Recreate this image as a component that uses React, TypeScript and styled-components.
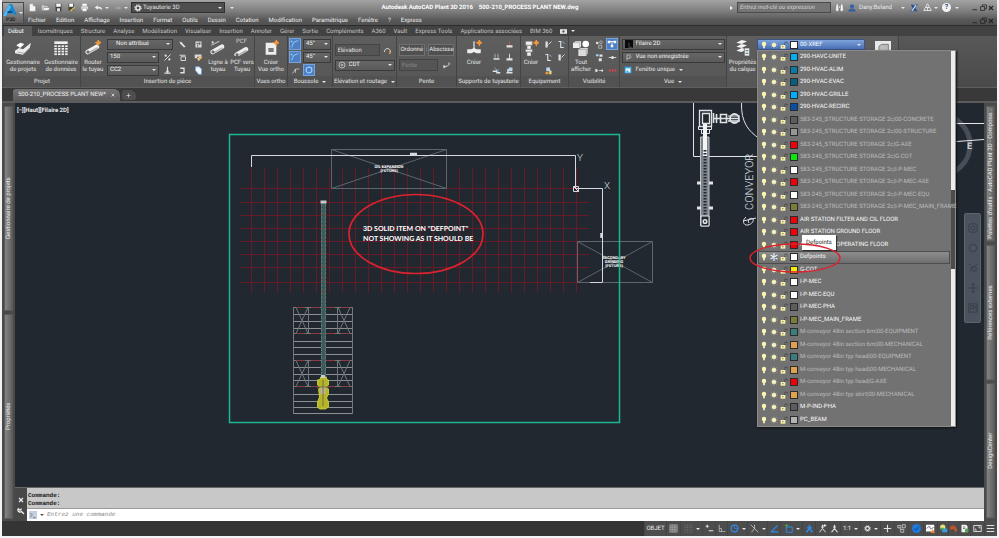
import React from 'react';
import styled, { createGlobalStyle, css } from 'styled-components';

const GlobalStyle = createGlobalStyle`
  * { box-sizing: border-box; }
  body { margin: 0; background: #f2f3f5; font-family: Roboto, "Liberation Sans", sans-serif; font-size: 6px; line-height: 8px; color: #e4e4e4; text-rendering: geometricPrecision; }
  button, input, select { font: inherit; color: inherit; text-rendering: inherit; margin: 0; padding: 0; border: 0; background: none; border-radius: 0; }
  svg { display: block; flex: none; }
  ul { list-style: none; margin: 0; padding: 0; }
`;

/* ---------- icons ---------- */

const W = '#e2e2e2';
const O = '#f0963c';
const B = '#2e8ae6';
const N = '#343d47';
const line = { fill: 'none', stroke: W, strokeWidth: 1.2 };

const pipe = (
  <g>
    <path d="M2 9 L9 5" stroke="#f0f0f0" strokeWidth="3.4" strokeLinecap="round" />
    <path d="M2.4 9.8 L9.4 5.8" stroke="#a8a8a8" strokeWidth="1" />
    <circle cx="2.2" cy="9" r="1.1" fill="#666" />
  </g>
);
const spark = <path d="M10 0l.6 1.4 1.4.6-1.4.6L10 4l-.6-1.4L8 2l1.4-.6z" fill={O} stroke={O} strokeWidth=".8" />;

const icons: Record<string, React.ReactNode> = {
  newFile: <path d="M2 1h5l3 3v7H2zM7 1v3h3" fill="#f4f4f4" stroke="#888" strokeWidth=".5" />,
  open: <g><path d="M1 3h3l1 1h4v2H4L2 10H1z" fill="#c9c9c9" /><path d="M4 6h8l-2 4H2z" fill="#f2f2f2" stroke="#666" strokeWidth=".5" /></g>,
  save: <g><path d="M2 1h8v10H2z" fill="#444" /><path d="M3 1h6v4H3z" fill="#fff" /><path d="M4 7h4v4H4z" fill="#ddd" /></g>,
  saveAs: <g><path d="M2 1h7v9H2z" fill="#444" /><path d="M3 1h5v4H3z" fill="#fff" /><path d="M4 10l6-5 1 1-5 5z" fill="#f1c24a" /></g>,
  print: <g><path d="M3 1h6v3H3z" fill="#fff" /><path d="M1 4h10v5H1z" fill="#ddd" stroke="#666" strokeWidth=".5" /><path d="M3 7h6v4H3z" fill="#fff" stroke="#777" strokeWidth=".5" /></g>,
  undo: <path d="M1 6l4-3v2c4-.5 6 1 6 5-1-2-3-2.600-6-2.500V9z" fill="#efefef" />,
  redo: <path d="M11 6L7 3v2H2v2h5v2z" fill="#a5a5a5" />,
  gear: <g fill="none" stroke="#f4f4f4"><circle cx="6" cy="6" r="3.200" strokeWidth="2" /><circle cx="6" cy="6" r="4.900" strokeWidth="1.300" strokeDasharray="2 1.850" /></g>,
  projects: <g><path d="M0 8l3-2 3 1 6-5-1 4-5 5-6-1z" fill="#ededed" /><path d="M1 4l3-2 3 1-3 3z" fill="#fff" /><path d="M2 9l5 1 4-4" stroke="#888" strokeWidth=".5" fill="none" /></g>,
  data: <g fill="#f0f0f0"><path d="M1 1h10v2H1z" />{[4, 6, 8, 10].map(y => [1, 3.700, 6.400, 9.100].map(x => <rect key={`${x}${y}`} x={x} y={y} width="1.900" height="1.300" />))}</g>,
  routePipe: <g>{pipe}{spark}</g>,
  linePipe: <g>{pipe}<path d="M1 4l6-3" stroke="#bbb" strokeWidth=".8" /><circle cx="2" cy="1.800" r=".8" fill={W} /></g>,
  pcfPipe: <g><g transform="translate(0 2)">{pipe}</g></g>,
  ortho: <g><path d="M2 2h7l1 2v7H2z" fill="#eee" /><path d="M4 6h4v3H4z" fill="#777" />{spark}</g>,
  probe: <path d="M2 2l3 1 5 6-2 1-5-5z" fill="#ddd" />,
  table: <g><path d="M2 2h8v8H2z" fill="#ddd" /><path d="M3 4.500h6M5 5v5M7.500 3v4" stroke="#555" /></g>,
  percent: <g><path d="M2 10l8-8" {...line} /><circle cx="3.500" cy="3.500" r="1.500" fill={W} /><circle cx="8.500" cy="8.500" r="1.500" fill={W} /></g>,
  frame: <g><path d="M2 3h8M4 5v5h6V5z" {...line} /></g>,
  bracket: <g><path d="M1 2h9v3H4v2H1z" fill="#d8d8d8" /><path d="M4 7l5-3 2 2-5 5z" fill="#e9c58a" /><path d="M6 8l4-3" stroke={O} /></g>,
  tee: <path d="M6 1v8M2 9.500h8M4 7h4" {...line} strokeWidth="1.600" />,
  elbow: <path d="M3 3h5v6H3" {...line} strokeWidth="1.800" />,
  capsule: <path d="M2 1h5l3 3v7H6L2 6z" fill="#f1f6fc" stroke="#6aa6e2" />,
  arc: <g><path d="M2 10C3 5 6 2 10 2" fill="none" stroke="#8fc0f2" strokeWidth="1.300" /><path d="M1 2h2v2H1z" fill="#9cc9f5" /></g>,
  slope: <path d="M2 10l4-6h5M6 4v5" {...line} strokeWidth=".9" />,
  compass: <circle cx="6" cy="6" r="3.500" fill="none" stroke="#a6d0fb" strokeWidth="1.300" />,
  rotate: <g><path d="M2 8a4 4 0 1 1 7 2" {...line} /><path d="M9 6l2 3-3 2z" fill={O} /></g>,
  target: <g><circle cx="6" cy="6" r="4.500" {...line} strokeWidth="1" /><path d="M6 4v4M4 6h4" stroke={W} /></g>,
  slopeTag: <g><path d="M2 7h5l3-3" {...line} /><path d="M2 5v5l3-2z" fill={W} /><path d="M8 2h3v3H8z" fill="#999" /></g>,
  support: <g><path d="M6 1v6M1 8h10" stroke="#ddd" strokeWidth="1" /><path d="M1 7h3l2-1 2 1h3v3H8l-2-1-2 1H1z" fill="#eee" />{spark}</g>,
  clamp: <g><path d="M6 1v7" {...line} /><path d="M2 7h8v3H2z" fill={W} /></g>,
  clampRed: <g><path d="M6 2v6" stroke="#e05a4a" /><path d="M2 7h8v3H2z" fill={W} /></g>,
  clampUp: <g><path d="M4 1v6M8 1v6" {...line} strokeWidth=".8" /><path d="M2 7h8v2H2z" fill={W} /></g>,
  clampBlue: <g><path d="M3 2l3 3v5M8 4v4" stroke="#8fc0f2" fill="none" /><path d="M1 6h6v2H1zM6 8h5v2H6z" fill={W} /></g>,
  clampBox: <g><path d="M5 2h5v5H5z" fill="#b7d6f7" /><path d="M2 8h8v2H2zM3 4h2v4H3z" fill={W} /></g>,
  vessel: <g><path d="M2 1h5v3H2zM3 4h3v3H3zM2 7h5v2H2zM3 9h3v3H3z" fill="#eee" stroke="#777" strokeWidth=".4" />{spark}</g>,
  nozzle: <g><path d="M2 2h3v8H2z" fill={W} /><path d="M6 6l4-4" {...line} /></g>,
  nozzleBlue: <g><path d="M2 2h3v8h4" fill="none" stroke={W} strokeWidth="1.500" /><path d="M7 2l3 3" stroke="#7db6f2" strokeWidth="1.300" /></g>,
  equipMix: <g><path d="M3 2h5v5H3z" fill="#b7d6f7" /><path d="M2 8h4v3H2z" fill={O} /><path d="M7 6h3v5H7z" fill="#f0dc7a" /></g>,
  showAll: <g><path d="M0 2l2-1h4v4l-1 1H0z" fill="#eee" /><circle cx="9.500" cy="3" r="2.500" fill="#fff" /><path d="M4 7l2-1h5v4l-1 2H4z" fill="#ddd" /><path d="M0 2h5v4M4 7h6v5" fill="none" stroke="#888" strokeWidth=".4" /></g>,
  balls: <g><circle cx="3" cy="4" r="1.800" fill={W} /><circle cx="8" cy="3" r="1.800" {...line} strokeWidth=".7" /><path d="M5 7h4v4H5z" {...line} strokeWidth=".8" /></g>,
  ballsBlue: <g><circle cx="3" cy="3" r="1.800" fill="#9cc9f5" /><path d="M6 2h4v3H6zM5 7h4v4H5z" fill={W} /></g>,
  nodes: <g><path d="M2 3h8M6 3v6" stroke="#fff" /><path d="M1 2h3v3H1zM8 2h3v3H8zM4.500 7h3v3h-3z" fill="#fff" /></g>,
  dashNode: <g><path d="M1 6h10" {...line} /><circle cx="6" cy="6" r="2" fill={W} /></g>,
  dashNode2: <g><path d="M1 4v4l3-2zM5 6h3" fill={W} stroke={W} /><circle cx="9.500" cy="6" r="1.500" fill={W} /></g>,
  redNodes: <g fill="#d8474a"><path d="M1 4v4l4-2zM11 4v4L7 6z" /><path d="M5.300 4h1.400v4H5.300z" /></g>,
  visual: <g><path d="M0 0h12v12H0z" fill="#0a0a0a" /><path d="M6 4v7h5" stroke="#666" fill="none" /></g>,
  viewTag: <path d="M3 11V3h6M6 6h4M3 8h5" {...line} strokeWidth=".9" />,
  viewport: <g><path d="M1 1h10v10H1z" fill="#38a8e8" /><path d="M2.500 3.500h7v6h-7z" fill="#e9f6ff" /><path d="M2.500 9.500l3-3 2 3z" fill="#38a8e8" /></g>,
  layers: <g><path d="M1 2l4-2 4 1-4 2zM1 5l4-2 4 1-4 2zM1 8l4-2 4 1-4 2z" fill="#f3f3f3" /><path d="M7 6h4v6H7z" fill="#eee" stroke="#555" strokeWidth=".5" /><path d="M8 8h2M8 10h2" stroke="#367" strokeWidth=".7" /></g>,
  block: <g><path d="M0 0h12v12H0z" fill="#e8e8e8" /><path d="M3 4l2-1.500h5V9L8.500 11H3z" fill="#bbb" stroke="#777" strokeWidth=".7" /></g>,
  bulb: <g><circle cx="6" cy="4.500" r="3.300" fill="#fbf6b4" /><path d="M4.500 7.500h3V11h-3z" fill="#ebe6b8" /></g>,
  sun: <g><circle cx="6" cy="6" r="3.100" fill="#fdfbd8" /><path d="M6 1v10M1 6h10M2.500 2.500l7 7M9.500 2.500l-7 7" stroke="#f4efb4" strokeWidth=".8" /></g>,
  frost: <g stroke="#e6f3ff" strokeWidth="1.700"><path d="M6 0v12M.8 3l10.400 6M11.200 3L.8 9" /></g>,
  lock: <g><path d="M1 6h7v5.500H1z" fill="#fbf0a8" /><path d="M3.500 7.500h1.500v2H3.500z" fill="#665" /><path d="M7 6V3C7 1 11 1 11 3v2" fill="none" stroke="#222" strokeWidth="1" strokeDasharray="2 1" /></g>,
  binoculars: <g fill="#f2f2f2" stroke="#444" strokeWidth=".4"><path d="M2 1h2l1 4v6H1V6zM8 1h2l1 5v5H7V5z" /><path d="M5 4h2v3H5z" /></g>,
  user: <g fill="#2f66ad" stroke="#1d4680" strokeWidth=".4"><circle cx="6" cy="3.500" r="2.700" /><path d="M1 11c0-5 10-5 10 0z" /></g>,
  exchange: <g><path d="M1 1h4l6 10H7z" fill="#1b4f94" /><path d="M8 1h3L4 11H1z" fill="#eee" stroke="#1b4f94" strokeWidth="1" /></g>,
  a360: <path d="M6 1l5 9H1zM3.500 6h5M6 5v5" fill="none" stroke="#e8e8e8" strokeWidth="1.200" />,
  snapGrid: <path d="M1 1h10v10H1zM4.300 1v10M7.600 1v10M1 4.300h10M1 7.600h10" fill="#777" stroke="#a5a5a5" strokeWidth=".8" />,
  dots: <g fill="#777">{[1, 4, 7, 10].map(y => [1, 4, 7, 10].map(x => <rect key={`${x}-${y}`} x={x} y={y} width="1.300" height="1.300" />))}</g>,
  dynInput: <path d="M1 3h4M3 1v4M5 9h6" stroke={W} strokeWidth="1.500" />,
  orthoMode: <path d="M3 1v9h8M3 6h3v4" fill="none" stroke="#aaa" strokeWidth="1.200" />,
  polar: <g><circle cx="6" cy="6" r="4.500" fill="none" stroke={B} strokeWidth="1.600" /><path d="M6 6V3M6 6h4" stroke={B} /></g>,
  iso: <path d="M1 1l10 10M6 1v5M6 6l-4 5" {...line} strokeWidth=".9" />,
  track: <path d="M1 11L10 2M1 10.500h10" stroke={B} strokeWidth="1.500" />,
  osnap: <g><path d="M3 4h8v7H3z" fill="none" stroke={B} strokeWidth="1.300" /><path d="M1 2h5M3.500 0v5" stroke="#45b34c" /></g>,
  annoBlue: <path d="M6 1v5L2 11M6 6l4 5M3 5h6" fill="none" stroke={B} strokeWidth="2.200" />,
  anno: <path d="M6 1v5L2 11M6 6l4 5M4 4h4" fill="none" stroke={W} strokeWidth="1.600" />,
  annoPlus: <path d="M6 1v5L2 11M6 6l4 5M4 4h4M9 0v4M7 2h4" fill="none" stroke={W} strokeWidth="1.300" />,
  plus: <path d="M6 1v10M1 6h10" {...line} strokeWidth="1.500" />,
  links: <path d="M1 2h4v3H1zM7 1h4v4H7zM5 7h4v4H5zM3 5l3 3" {...line} strokeWidth=".9" />,
  check: <g><circle cx="6" cy="6" r="6" fill="#1e79dc" /><path d="M3 6l2.300 2.500L9 3.500" fill="none" stroke="#0b3f80" strokeWidth="1.200" /></g>,
  monitor: <g><path d="M0 1h11v9H0z" fill="#fff" /><path d="M1 6l3-3 3 4 3-3" fill="none" stroke="#444" /><path d="M9 7l3 5H6z" fill="#f0862c" /></g>,
  globe: <g><circle cx="5" cy="4" r="3.500" fill="#e9e27b" /><path d="M4 6h7v5H4z" fill="#3a9fd8" /><path d="M2 5h4v3H2z" fill="#4aa04a" /></g>,
  tag: <path d="M1 5c2-5 9-4 10 4L8 11C8 7 5 5 2 8z" fill="#c0532c" />,
  sheet: <g><path d="M2 1h6l2 2v8H2z" fill="#f3f3f3" /><path d="M4 4h3M4 6h3" stroke="#555" /><circle cx="9" cy="8.500" r="2.500" fill="#4ea354" /></g>,
  fullscreen: <path d="M1 2h10v8H1zM7 4h2v2M3 6v2h2" {...line} />,
  menu: <path d="M1 2h10M1 6h10M1 10h10" {...line} strokeWidth="1.600" />,
  wrench: <path d="M10.500 10.500L6 6M2 2.500l2.500 2.500L7 2.500M2.500 2a3.200 3.200 0 1 0 4.500 4.500" fill="none" stroke="#f2f2f2" strokeWidth="1.800" />,
  close: <path d="M2 2l8 8M10 2l-8 8" stroke="currentColor" strokeWidth="2.200" />,
  minimize: <path d="M1 9.500h9" stroke="currentColor" strokeWidth="1.800" />,
  restore: <path d="M4 4V1.500h7V8H8M1 4.500h7V11H1z" fill="none" stroke="currentColor" strokeWidth="1.300" />,
  camera: <g><path d="M0 2h12v8H0z" fill="#e6e6e6" /><circle cx="6" cy="6" r="2" fill="#555" /></g>,
  prompt: <g><path d="M0 0h12v12H0z" fill="#c3cfdf" /><path d="M2 3l3 3-3 3M6 10h4" fill="none" stroke="#4a5868" /></g>,
  wheel: <g fill="none" stroke={N}><rect x="1" y="1" width="10" height="10" rx="2" /><circle cx="6" cy="6" r="2.500" /></g>,
  orbit: <circle cx="6" cy="6" r="4.500" fill="none" stroke={N} />,
  zoomNav: <g fill="none" stroke={N}><path d="M1 1l10 10M11 1L1 11" strokeDasharray="3 2" /><circle cx="7" cy="7" r="3" /></g>,
  pan: <path d="M6 0v12M0 6h12M4 2l2-2 2 2M4 10l2 2 2-2" fill="none" stroke={N} />,
  showMotion: <path d="M1 1h10v10H1zM3 3h4v4H3zM6 5h4v4" fill="none" stroke={N} />,
};

const Icon = ({ name, size = 8 }: { name: string; size?: number }) => (
  <svg width={size} height={size} viewBox="0 0 12 12" aria-hidden="true">{icons[name]}</svg>
);

const Caret = styled.span`
  flex: none; width: 0; height: 0;
  border: 2px solid transparent; border-top-color: #e6e6e6; border-bottom: 0;
`;

/* ---------- shell ---------- */

const Page = styled.div`
  min-height: 100vh; display: flex; flex-direction: column;
  margin: 0 2px; padding-bottom: 2px; overflow: hidden;
`;
const Header = styled.header`
  display: flex; height: 26px;
  background: linear-gradient(#a3a3a3, #7e7e7e 45%, #585858 80%, #505050);
  border-bottom: 1px solid #2d2d2d;
`;
const LogoButton = styled.button`
  display: flex; align-items: center; justify-content: center; gap: 2px;
  width: 22px; height: 22px; margin: 2px 2px 0 0;
  background: linear-gradient(#a5a5a5, #606060); border: 1px solid #4a4a4a;
`;
const HeaderRows = styled.div`flex: 1; display: grid; grid-template-rows: 15px 11px; min-width: 0;`;
const TitleRow = styled.div`display: flex; align-items: center; padding: 0 2px 0 2px;`;
const QuickBar = styled.div`display: flex; align-items: center; gap: 4px;`;
const IconButton = styled.button<{ $active?: boolean; $w?: number }>`
  display: flex; align-items: center; justify-content: center; gap: 2px;
  width: ${p => p.$w ?? 9}px; height: ${p => (p.$w === 12 ? 12 : 10)}px;
  ${p => p.$active && css`background: #4c7fc4; border: 1px solid #7aa5dc;`}
`;
const Workspace = styled.label`
  display: flex; align-items: center; gap: 1px; width: 94px; height: 11px;
  padding: 0 2px; margin: 0 2px;
  background: #4e4e4e; border: 1px solid #303030;
  select { flex: 1; appearance: none; }
`;
const AppTitle = styled.h1`
  flex: 1; margin: 0; padding-right: 6px; text-align: center;
  font-size: 6px; line-height: 8px; font-weight: 700; color: #fff; white-space: pre;
`;
const AccountBar = styled.div`display: flex; align-items: center; gap: 4px;`;
const SearchBox = styled.input`
  width: 94px; height: 11px; padding: 0 2px; font-style: italic;
  background: #747474; border: 1px solid #4a4a4a;
  &::placeholder { color: #d2d2d2; opacity: 1; }
`;
const SearchToggle = styled.button`
  width: 0; height: 0; border: 2px solid transparent; border-left: 3px solid #f0f0f0; border-right: 0;
`;
const UserButton = styled.button`
  display: flex; align-items: center; gap: 3px; width: 57px; color: #eee;
  ${Caret} { margin-left: auto; }
`;
const Help = styled.button`
  width: 9px; height: 9px; border-radius: 50%; background: #f4f4f4; color: #2f4f86;
  font-weight: 700; line-height: 9px; font-size: 7px;
`;
const WindowButtons = styled.div`
  display: flex; align-items: center; width: 24px; margin-left: 12px; color: #222;
  button { flex: 1; display: flex; justify-content: center; }
`;
const MenuRow = styled.nav`
  display: flex; align-items: center; gap: 10px; padding: 0 2px 0 2px; color: #f0f0f0;
  button { white-space: nowrap; }
  ${WindowButtons} { margin-left: auto; gap: 0; }
`;
const RibbonTabs = styled.div`
  display: flex; height: 10px; padding-left: 2px; background: #424242;
`;
const RibbonTab = styled.button<{ $active?: boolean }>`
  display: flex; align-items: center; gap: 4px; padding: 0 4px; line-height: 9px; white-space: nowrap; color: #c4c4c4;
  ${p => p.$active && css`background: #5c5c5c; color: #fff; padding: 0 8px 0 4px; margin-right: 2px;`}
`;

/* ---------- ribbon ---------- */

const Ribbon = styled.div`
  display: flex; height: 52px; padding-left: 2px;
  background: linear-gradient(#585858, #4a4a4a); border-bottom: 1px solid #5f5f5f;
`;
const PanelBox = styled.section<{ $w: number }>`
  flex: none; width: ${p => p.$w}px;
  display: grid; grid-template-rows: 1fr 11px; padding-top: 2px;
  background: linear-gradient(#5e5e5e, #565656);
  border-right: 1px solid #444;
`;
const PanelBody = styled.div<{ $gap?: number }>`
  display: flex; justify-content: center; gap: ${p => p.$gap ?? 2}px; min-width: 0;
`;
const PanelLabel = styled.h2`
  display: flex; align-items: center; justify-content: center; gap: 4px; white-space: nowrap;
  margin: 0; font-size: 6px; line-height: 8px; font-weight: 400; background: #525252;
`;
const Panel = ({ w, title, menu, gap, children }: { w: number; title?: string; menu?: boolean; gap?: number; children: React.ReactNode }) => (
  <PanelBox $w={w}>
    <PanelBody $gap={gap}>{children}</PanelBody>
    <PanelLabel>{title}{menu && <Caret />}</PanelLabel>
  </PanelBox>
);

const Big = styled.button<{ $w: number }>`
  position: relative; display: flex; flex-direction: column; align-items: center; gap: 3px;
  width: ${p => p.$w}px; padding-top: 2px; line-height: 7px; white-space: pre; text-align: center;
`;
const Overline = styled.span`position: absolute; top: 0; left: 6px; color: #d0d0d0;`;
const Stack = styled.div<{ $wide?: boolean }>`
  display: grid; grid-auto-rows: 12px; gap: 1px; align-content: start; align-items: center;
  ${p => p.$wide && css`padding-top: 6px; gap: 3px;`}
`;
const Row = styled.div<{ $gap?: number }>`display: flex; align-items: center; gap: ${p => p.$gap ?? 2}px;`;
const Pair = styled.div<{ $cols?: number; $col?: number }>`
  display: grid; grid-template-columns: repeat(${p => p.$cols ?? 2}, ${p => p.$col ?? 12}px);
  grid-auto-rows: 12px; gap: 1px; align-content: start; justify-items: center; align-items: center;
`;
const Field = styled.label<{ $w: number; $indent?: boolean }>`
  display: flex; align-items: center; gap: 3px; width: ${p => p.$w}px; height: 11px;
  padding: 0 2px 0 ${p => (p.$indent ? 8 : 2)}px;
  background: linear-gradient(#666, #5a5a5a); border: 1px solid #3a3a3a; color: #f0f0f0;
  select { flex: 1; min-width: 0; appearance: none; overflow: hidden; }
`;
const TextField = styled.input<{ $w: number }>`
  width: ${p => p.$w}px; height: 12px; padding: 0 2px; background: #555; border: 1px solid #444;
  &::placeholder { color: inherit; opacity: 1; }
  &:disabled { color: #888; }
`;
const FlatButton = styled.button<{ $w: number }>`
  width: ${p => p.$w}px; height: 12px; background: #505050; border: 1px solid #707070; color: #f0f0f0;
`;
const TextButton = styled.button`display: flex; align-items: center; gap: 4px; padding-left: 2px;`;

const Combo = ({ w, value, label, icon, indent }: { w: number; value: string; label: string; icon?: string; indent?: boolean }) => (
  <Field $w={w} $indent={indent}>
    {icon && <Icon name={icon} />}
    <select aria-label={label} defaultValue={value}><option>{value}</option></select>
    <Caret />
  </Field>
);
const Tool = ({ name, label, active }: { name: string; label: string; active?: boolean }) => (
  <IconButton $w={12} $active={active} aria-label={label}><Icon name={name} size={active ? 10 : 9} /></IconButton>
);

/* ---------- layer list ---------- */

type Layer = { name: string; color: string; xref?: boolean };
const S = '583-245_STRUCTURE STORAGE 2c|';
const layers: Layer[] = [
  { name: '290-HAVC-UNITE', color: '#00aeef' },
  { name: '290-HVAC-ALIM', color: '#0a7aa6' },
  { name: '290-HVAC-EVAC', color: '#075f80' },
  { name: '290-HVAC-GRILLE', color: '#00aeff' },
  { name: '290-HVAC-RECIRC', color: '#0650a6' },
  { name: S + '00-CONCRETE', color: '#5c5c5c', xref: true },
  { name: S + '00-STRUCTURE', color: '#969696', xref: true },
  { name: S + 'G-AXE', color: '#f00008', xref: true },
  { name: S + 'G-COT', color: '#0be610', xref: true },
  { name: S + 'I-P-MEC', color: '#fff', xref: true },
  { name: S + 'I-P-MEC-AXE', color: '#f00008', xref: true },
  { name: S + 'I-P-MEC-EQU', color: '#fff', xref: true },
  { name: S + 'I-P-MEC_MAIN_FRAME', color: '#7c7c38', xref: true },
  { name: 'AIR STATION FILTER AND CIL FLOOR', color: '#f00008' },
  { name: 'AIR STATION GROUND FLOOR', color: '#f00008' },
  { name: 'AIR STATION OPERATING FLOOR', color: '#f00008' },
  { name: 'Defpoints', color: '#fff' },
  { name: 'G-COT', color: '#f7ee00' },
  { name: 'I-P-MEC', color: '#fff' },
  { name: 'I-P-MEC-EQU', color: '#fff' },
  { name: 'I-P-MEC-PHA', color: '#5c5c5c' },
  { name: 'I-P-MEC_MAIN_FRAME', color: '#7c7c38' },
  { name: 'M-conveyor 48in section 6m|00-EQUIPMENT', color: '#3c7c7c', xref: true },
  { name: 'M-conveyor 48in section 6m|00-MECHANICAL', color: '#e0a050', xref: true },
  { name: 'M-conveyor 48in typ head|00-EQUIPMENT', color: '#3c7c7c', xref: true },
  { name: 'M-conveyor 48in typ head|00-MECHANICAL', color: '#e0a050', xref: true },
  { name: 'M-conveyor 48in typ head|G-AXE', color: '#f00008', xref: true },
  { name: 'M-conveyor 48in typ skirt|00-MECHANICAL', color: '#e0a050', xref: true },
  { name: 'M-P-IND-PHA', color: '#5c5c5c' },
  { name: 'PC_BEAM', color: '#b4b4b4' },
];

const LayerAnchor = styled.div`position: relative; z-index: 5; padding-top: 1px;`;
const LayerCombo = styled.button`
  display: flex; align-items: center; width: 108px; height: 11px; padding: 0 3px 0 2px;
  background: linear-gradient(#7fa3da, #4a6fb4); border: 1px solid #3c5588; color: #fff;
  ${Caret} { margin-left: auto; }
`;
const LayerMenu = styled.div`
  position: absolute; top: 12px; left: 0; display: flex; width: 199px; height: 377px;
  background: #727272; border: 1px solid #8a8a8a; box-shadow: 1px 1px 2px #111;
`;
const LayerList = styled.ul`
  flex: 1; display: grid; grid-template-columns: minmax(0, 1fr); grid-auto-rows: 1fr; min-width: 0; padding-right: 1px;
`;
const LayerRow = styled.li<{ $xref?: boolean; $current?: boolean }>`
  position: relative; display: flex; align-items: center; padding-left: 1px; white-space: nowrap;
  border: 1px solid transparent; color: ${p => (p.$xref ? '#bcbcbc' : '#fafafa')};
  ${p => p.$current && css`background: linear-gradient(#8d8d8d, #6e6e6e); border-color: #4e4e4e;`}
`;
const Glyphs = styled.span`display: flex; align-items: center; gap: 2px; width: 30px; flex: none;`;
const Swatch = styled.span<{ $color: string }>`
  flex: none; width: 8px; height: 8px; margin-right: 2px; border: 1px solid #2c2c2c; background: ${p => p.$color};
`;
const ScrollTrack = styled.div`display: flex; flex-direction: column; width: 4px; background: #ececec; padding-top: 139px;`;
const ScrollThumb = styled.div`height: 79px; background: #4c4c4c;`;
const Tooltip = styled.span`
  position: absolute; z-index: 2; left: 43px; top: -17px; width: 34px; padding: 3px 0; line-height: 9px; text-align: center;
  background: #fff; color: #222; font-size: 6px; box-shadow: 1px 1px 1px #333;
`;
const Ring = styled.svg`position: absolute; left: -11px; top: -10px; z-index: 3; pointer-events: none;`;

const LayerGlyphs = ({ frozen }: { frozen?: boolean }) => (
  <Glyphs><Icon name="bulb" size={8} /><Icon name={frozen ? 'frost' : 'sun'} size={8} /><Icon name="lock" size={8} /></Glyphs>
);

/* ---------- workspace ---------- */

const FileTabs = styled.div`
  display: flex; align-items: flex-end; height: 15px; padding-left: 11px; background: #393939;
  border-bottom: 2px solid #5c5c5c;
`;
const FileTab = styled.button`
  display: flex; align-items: center; gap: 5px; height: 12px; padding: 0 5px;
  background: linear-gradient(#747474, #5c5c5c); border-radius: 3px 6px 0 0; color: #f0f0f0;
`;
const NewTab = styled.button`
  display: flex; align-items: center; justify-content: center; width: 14px; height: 10px;
  margin: 0 0 1px 2px; background: #4e4e4e; border-radius: 3px 6px 3px 3px;
`;
const Work = styled.main`flex: 1; display: flex; min-height: 0;`;
const Dock = styled.aside`
  flex: none; width: 13px; display: flex; flex-direction: column; gap: 3px; padding: 3px 2px 2px;
  background: #4a4a4a;
`;
const DockBar = styled.button`
  flex: 1; writing-mode: vertical-rl; transform: rotate(180deg); white-space: nowrap;
  background: linear-gradient(90deg, #5f5f5f, #858585); border: 1px solid #5a5a5a; color: #eee; line-height: 8px;
`;
const Center = styled.div`flex: 1; display: flex; flex-direction: column; min-width: 0;`;
const Canvas = styled.div`
  position: relative; flex: 1; min-height: 0; overflow: hidden; background: #212830;
`;
const Drawing = styled.svg`position: absolute; inset: 0; width: 100%; height: 100%;`;
const ViewLabel = styled.div`position: relative; padding: 3px 2px; line-height: 9px; font-weight: 700; color: #e6e6e6;`;
const NavBar = styled.div`
  position: absolute; right: 3px; top: 110px; width: 17px; padding: 9px 0;
  display: flex; flex-direction: column; align-items: center; gap: 10px;
  background: #4b545e; border: 1px solid #5d656e; border-radius: 2px;
`;
const Command = styled.div`display: grid; grid-template-columns: 12px 1fr; height: 34px; border-top: 1px solid #666;`;
const CommandTools = styled.div`
  display: flex; flex-direction: column; align-items: center; justify-content: flex-end; gap: 4px;
  padding-bottom: 6px; background: #474747; color: #f2f2f2;
`;
const CommandBody = styled.div`
  display: grid; grid-template-rows: 1fr 12px; font: 6px/8px "Liberation Mono", monospace; color: #222;
`;
const History = styled.div`
  background: #c8c8c8; border-bottom: 1px solid #999; padding: 0 1px; display: flex; flex-direction: column; justify-content: flex-end;
  font-weight: 700;
`;
const CommandLine = styled.label`
  display: flex; align-items: center; gap: 3px; padding-left: 2px; background: #fff;
  ${Caret} { border-top-color: #555; }
  input { flex: 1; font-style: italic; }
  input::placeholder { color: #8a8a8a; opacity: 1; }
`;
const Status = styled.footer`
  display: flex; justify-content: flex-end; height: 15px; background: #343434;
`;
const StatusTools = styled.div`display: flex; align-items: stretch; background: #4d4d4d; padding-right: 1px;`;
const StatusButton = styled.button<{ $w: number }>`
  display: flex; align-items: center; justify-content: center; gap: 3px; width: ${p => p.$w}px;
  color: #f0f0f0; border-left: 1px solid #454545;
`;

const Plant = () => {
  const xs = Array.from({ length: 26 }, (_, i) => 251.5 + i * 13);
  const ys = [188.5, 202.5, 215.5, 228.5, 241.5, 254.500, 267.5, 282.5];
  const beams = [314.5, 321.5, 328.5, 341.5, 347.5, 354.5, 367.5, 374.5, 380.5, 394.5, 401.5, 407.5, 413.5];
  return (
    <Drawing viewBox="15 103 969 384" preserveAspectRatio="xMinYMin slice" fill="none" aria-label="Plan de l'usine">
      <g stroke="#661b27" strokeWidth="1">
        {xs.map(x => <path key={x} d={`M${x} 168V292`} />)}
        {ys.map(y => <path key={y} d={`M240 ${y}H589`} />)}
      </g>
      <g stroke="#5e666d">
        <path d="M331.500 149.500H446.500V188.500H331.500zL446.500 188.500M446.500 149.500L331.500 188.500" />
        <path d="M577.500 241.500H652.500V282.500H577.500zL652.500 282.500M652.500 241.500L577.500 282.500" />
      </g>
      <g stroke="#d6dade">
        <path d="M251.500 167V155.500H575.500V188.500H602.500V282.500M590 282.500H602" />
        <path d="M573.500 186.500h5v5h-5zM573.500 186.500l5 5" />
        <path d="M410 154h7M601.500 233v5" strokeWidth="2.500" />
      </g>
      <g fill="#d6dade" fontFamily="Roboto, sans-serif" fontWeight="300" fontSize="10">
        <text x="577" y="161">Y</text><text x="604" y="189">X</text>
      </g>
      <g fill="#fff" fontFamily="Roboto, sans-serif" fontWeight="700" fontSize="4" textAnchor="middle">
        <text x="389" y="168">OIL EXPANSION</text><text x="389" y="172">(FUTURE)</text>
        <text x="614" y="259">SECONDARY</text><text x="614" y="263">GRINDING</text><text x="614" y="267">(FUTURE)</text>
      </g>
      <rect x="229.500" y="134.500" width="390" height="288" stroke="#1eb88f" strokeWidth="1.500" />
      <g stroke="#8b9095">
        {beams.map(y => <path key={y} d={`M294 ${y}H352`} />)}
      </g>
      <g stroke="#72777c">
        <path d="M293.500 307V414M352.500 307V414" />
        {[307.5, 360.5].map(y => (
          <g key={y}>
            <path d={`M294 ${y}H352M294 ${y + 26}H352`} />
            <path d={`M308.500 ${y}v26M337.500 ${y}v26M296 ${y}l12 26M308 ${y}l-12 26M338 ${y}l12 26M350 ${y}l-12 26`} />
          </g>
        ))}
      </g>
      <path d="M296 307.500H352M296 333.500H352M296 360.500H352M296 386.500H352" stroke="#8e3a42" strokeDasharray="9 6" />
      <path d="M323.500 202V378" stroke="#3d5b5c" strokeWidth="5" />
      <path d="M321.500 204V376M325.500 204V376" stroke="#6b7f7c" strokeWidth=".7" strokeDasharray="3 1" />
      <path d="M323.500 212V300" stroke="#6e4c46" strokeWidth="1.500" strokeDasharray="4 9" />
      <path d="M320.500 200.500h6v3h-6z" fill="#c8c8c8" />
      <path d="M317.500 380l3-1v-2h6v2l2 1v5l-3 2 3 2v5l-2 4 2 4v5l-3 2h-6l-2-2v-5l2-5-1-8 2-2-3-2z" fill="#b5b528" stroke="#d8d838" strokeWidth=".8" />
      <path d="M320.500 387h5v7h-5z" fill="#bcb6a0" />
      <path d="M323 380v26M317 387h12" stroke="#7e6a45" />
      <path d="M321 375h4v3h-4z" fill="#ccc" />
      <ellipse cx="416" cy="234" rx="67" ry="39.500" stroke="#d9232e" strokeWidth="1.700" />
      <g fill="#fff" fontFamily="Lato, sans-serif" fontWeight="700" fontSize="7">
        <text x="363" y="231">3D SOLID ITEM ON "DEFPOINT"</text>
        <text x="363" y="241">NOT SHOWING AS IT SHOULD BE</text>
      </g>

      <g stroke="#dfe3e6">
        <path d="M693.500 103V156.500H760M741.500 103C741 122 748 131 760 139" />
        <path d="M699.500 110.500h12v16h-12zM702.500 113.500h7v10h-7z" strokeWidth="1.300" />
        <path d="M698.500 126.500h13v3h-13zM701.500 129.500h8v4h-8z" />
        <path d="M700.500 137h8.500v89h-8.500z" fill="#7d8489" stroke="#b9bec2" />
        <path d="M705 124V156" strokeWidth="4" stroke="#f4f4f4" />
        <path d="M705 150V222" stroke="#212830" strokeWidth="3" strokeDasharray="1.500 1.500" />
        <path d="M697 183h4M709 183h4M697 208h4M709 208h4" strokeWidth="3" />
        <path d="M701 216h8v10h-8z" fill="#212830" />
        <circle cx="705" cy="221.500" r="1.800" strokeWidth="1.500" />
        <path d="M713.500 113v10M716.500 114v9M714 118.500H738M720.500 114.500h6v8h-6zM728 121h12" strokeWidth="1.600" />
        <circle cx="734.500" cy="118.500" r="4.500" strokeWidth="1.800" />
        <path d="M728 116h12" />
        <path d="M746 217c-4 3-3 9 2 8 4-1 6-4 5-6-3-2-6 1-4 4M743 221l13-3" />
      </g>
      <text transform="translate(753 210) rotate(-90)" fill="#e6e9ec" fontFamily="Roboto, sans-serif" fontWeight="300" fontSize="11">CONVEYOR</text>
      <circle cx="940" cy="145" r="30" stroke="#474e57" strokeWidth="5" />
      <path d="M950 123.500H984M950 142L984 139.500" stroke="#e4e7ea" />
      <text x="967" y="149" fill="#c9ced3" fontFamily="Roboto, sans-serif" fontWeight="700" fontSize="9">E</text>
    </Drawing>
  );
};

const WinControls = ({ scope }: { scope: string }) => (
  <WindowButtons>
    <button aria-label={`Réduire ${scope}`}><Icon name="minimize" size={6} /></button>
    <button aria-label={`Restaurer ${scope}`}><Icon name="restore" size={7} /></button>
    <button aria-label={`Fermer ${scope}`}><Icon name="close" size={6} /></button>
  </WindowButtons>
);

const menus = ['Fichier', 'Edition', 'Affichage', 'Insertion', 'Format', 'Outils', 'Dessin', 'Cotation', 'Modification', 'Paramétrique', 'Fenêtre', '?', 'Express'];
const tabs = ['Début', 'Isométriques', 'Structure', 'Analyse', 'Modélisation', 'Visualiser', 'Insertion', 'Annoter', 'Gérer', 'Sortie', 'Compléments', 'A360', 'Vault', 'Express Tools', 'Applications associées', 'BIM 360'];
const status: { icon?: string; text?: string; w: number; menu?: boolean }[] = [
  { text: 'OBJET', w: 22 }, { icon: 'snapGrid', w: 14 }, { icon: 'dots', w: 22, menu: true }, { icon: 'dynInput', w: 13 },
  { icon: 'orthoMode', w: 12 }, { icon: 'polar', w: 20, menu: true }, { icon: 'iso', w: 20, menu: true },
  { icon: 'track', w: 13 }, { icon: 'osnap', w: 22, menu: true }, { icon: 'annoBlue', w: 13 }, { icon: 'annoPlus', w: 13 },
  { icon: 'anno', w: 12 }, { text: '1:1', w: 20, menu: true }, { icon: 'gear', w: 20, menu: true }, { icon: 'plus', w: 14 },
  { icon: 'links', w: 14 }, { icon: 'check', w: 15 }, { icon: 'monitor', w: 14 }, { icon: 'globe', w: 11 },
  { icon: 'tag', w: 10 }, { icon: 'sheet', w: 12 }, { icon: 'fullscreen', w: 14 }, { icon: 'menu', w: 12 },
];

export default function App() {
  return (
    <>
      <GlobalStyle />
      <Page>
        <Header>
          <LogoButton aria-label="Menu de l'application">
            <svg width="14" height="20" viewBox="0 0 14 20">
              <path d="M6 1h3l5 11h-3l-1-2-5 1-2 2H0z" fill="#1c86d1" />
              <path d="M6 1L0 13h3l5-9z" fill="#54b5f0" />
              <path d="M5 8h4l1 2H4z" fill="#0e4f86" />
              <text x="3" y="18" fontSize="5" fontWeight="700" fill="#222">P3D</text>
            </svg>
            <Caret />
          </LogoButton>
          <HeaderRows>
            <TitleRow>
              <QuickBar>
                {['newFile', 'open', 'save', 'saveAs', 'print'].map(n => (
                  <IconButton key={n} aria-label={n}><Icon name={n} size={9} /></IconButton>
                ))}
                <IconButton $w={16} aria-label="Annuler"><Icon name="undo" size={9} /><Caret /></IconButton>
                <IconButton $w={16} aria-label="Rétablir"><Icon name="redo" size={8} /><Caret /></IconButton>
              </QuickBar>
              <Workspace>
                <Icon name="gear" size={8} />
                <select aria-label="Espace de travail" defaultValue="Tuyauterie 3D"><option>Tuyauterie 3D</option></select>
                <Caret />
              </Workspace>
              <IconButton aria-label="Personnaliser"><Caret /></IconButton>
              <AppTitle>{'Autodesk AutoCAD Plant 3D 2016    500-210_PROCESS PLANT NEW.dwg'}</AppTitle>
              <AccountBar>
                <SearchToggle aria-label="Afficher la recherche" />
                <SearchBox aria-label="Recherche" placeholder="Entrez mot-clé ou expression" />
                <IconButton aria-label="Rechercher"><Icon name="binoculars" size={9} /></IconButton>
                <UserButton><Icon name="user" size={8} />Dany.Beland<Caret /></UserButton>
                <IconButton aria-label="Exchange"><Icon name="exchange" size={8} /></IconButton>
                <IconButton $w={16} aria-label="A360"><Icon name="a360" size={9} /><Caret /></IconButton>
                <Help aria-label="Aide">?</Help>
                <Caret />
              </AccountBar>
              <WinControls scope="l'application" />
            </TitleRow>
            <MenuRow>
              {menus.map(m => <button key={m}>{m}</button>)}
              <WinControls scope="le dessin" />
            </MenuRow>
          </HeaderRows>
        </Header>

        <RibbonTabs>
          {tabs.map((t, i) => <RibbonTab key={t} $active={i === 0}>{t}</RibbonTab>)}
          <RibbonTab aria-label="Affichage du ruban"><Icon name="camera" size={7} /><Caret /></RibbonTab>
        </RibbonTabs>

        <Ribbon>
          <Panel w={77} title="Projet" gap={0}>
            <Big $w={38}><Icon name="projects" size={16} />{'Gestionnaire\nde projets'}</Big>
            <Big $w={38}><Icon name="data" size={16} />{'Gestionnaire\nde données'}</Big>
          </Panel>
          <Panel w={174} title="Insertion de pièce" gap={2}>
            <Big $w={24}><Icon name="routePipe" size={16} />{'Router\nle tuyau'}</Big>
            <Stack>
              <Combo w={66} value="Non attribué" label="Numéro de ligne" indent />
              <Row><Combo w={52} value="150" label="Diamètre" /><Tool name="percent" label="Pente" /></Row>
              <Row><Combo w={52} value="CC2" label="Spécification" /><Tool name="tee" label="Té" /></Row>
            </Stack>
            <Pair $col={15}>
              <Tool name="probe" label="Sonde" /><Tool name="table" label="Tableau" />
              <Tool name="frame" label="Cadre" /><Tool name="bracket" label="Bride" />
              <Tool name="elbow" label="Coude" /><Tool name="capsule" label="Raccord" />
            </Pair>
            <Big $w={20}><Icon name="linePipe" size={16} />{'Ligne à\ntuyau'}</Big>
            <Big $w={24}><Overline>PCF</Overline><Icon name="pcfPipe" size={16} />{'PCF vers\nTuyau'}</Big>
          </Panel>
          <Panel w={33} title="Vues ortho">
            <Big $w={30}><Icon name="ortho" size={16} />{'Créer\nVue ortho'}</Big>
          </Panel>
          <Panel w={45} title="Boussole" menu>
            <Stack>
              <Row><Tool name="arc" label="Arc" active /><Combo w={28} value="45°" label="Angle 1" /></Row>
              <Row><Tool name="arc" label="Tolérance" active /><Combo w={28} value="45°" label="Angle 2" /></Row>
              <Row><Tool name="slope" label="Plan" /><Tool name="compass" label="Boussole" active /></Row>
            </Stack>
          </Panel>
          <Panel w={64} title="Elévation et routage" menu>
            <Stack $wide>
              <Row><TextField $w={45} aria-label="Elévation" placeholder="Elévation" /><Tool name="rotate" label="Rotation" /></Row>
              <Combo w={60} value="CDT" label="Point de référence" icon="target" />
            </Stack>
          </Panel>
          <Panel w={60} title="Pente">
            <Stack $wide>
              <Row $gap={1}><FlatButton $w={26}>Ordonné</FlatButton>:<FlatButton $w={26}>Abscisse</FlatButton></Row>
              <Row $gap={3}><TextField $w={39} aria-label="Pente" placeholder="Pente" disabled /><Tool name="slopeTag" label="Définir la pente" /></Row>
            </Stack>
          </Panel>
          <Panel w={64} title="Supports de tuyauterie" gap={4}>
            <Big $w={24}><Icon name="support" size={16} />Créer</Big>
            <Pair>
              <span /><Tool name="clampRed" label="Support 1" />
              <Tool name="clampUp" label="Support 2" /><Tool name="clamp" label="Support 3" />
              <Tool name="clampBlue" label="Support 4" /><Tool name="clampBox" label="Support 5" />
            </Pair>
          </Panel>
          <Panel w={48} title="Equipement">
            <Big $w={18}><Icon name="vessel" size={16} />Créer</Big>
            <Pair>
              <Tool name="nozzle" label="Tubulure 1" /><Tool name="nozzleBlue" label="Tubulure 2" />
              <Tool name="nozzleBlue" label="Tubulure 3" /><Tool name="nozzle" label="Tubulure 4" />
              <Tool name="equipMix" label="Convertir" />
            </Pair>
          </Panel>
          <Panel w={51} title="Visibilité" gap={1}>
            <Big $w={22}><Icon name="showAll" size={16} />{'Tout\nafficher'}</Big>
            <Pair>
              <Tool name="balls" label="Masquer" /><Tool name="nodes" label="Connexions" active />
              <Tool name="ballsBlue" label="Isoler" /><Tool name="dashNode" label="Noeud" />
              <Tool name="dashNode2" label="Ligne" /><Tool name="redNodes" label="Déconnexions" />
            </Pair>
          </Panel>
          <Panel w={107} title="Vue" menu>
            <Stack>
              <Combo w={103} value="Filaire 2D" label="Style visuel" icon="visual" />
              <Combo w={103} value="Vue non enregistrée" label="Vue" icon="viewTag" />
              <TextButton><Icon name="viewport" size={8} />Fenêtre unique <Caret /></TextButton>
            </Stack>
          </Panel>
          <PanelBox $w={172}>
            <LayerTools>
              <Big $w={29}><Icon name="layers" size={16} />{'Propriétés\ndu calque'}</Big>
              <LayerAnchor>
                <LayerCombo aria-haspopup="listbox" aria-expanded="true">
                  <LayerGlyphs /><Swatch $color="#fff" />00-XREF<Caret />
                </LayerCombo>
                <LayerMenu>
                  <LayerList role="listbox" aria-label="Calques">
                    {layers.map(l => {
                      const current = l.name === 'Defpoints';
                      return (
                        <LayerRow key={l.name} role="option" aria-selected={current} $xref={l.xref} $current={current}>
                          <LayerGlyphs frozen={current} /><Swatch $color={l.color} />{l.name}
                          {current && <Tooltip role="tooltip">Defpoints</Tooltip>}
                          {current && (
                            <Ring width="94" height="32" viewBox="0 0 94 32">
                              <ellipse cx="47" cy="16" rx="45" ry="14" fill="none" stroke="#d9232e" strokeWidth="1.500" />
                            </Ring>
                          )}
                        </LayerRow>
                      );
                    })}
                  </LayerList>
                  <ScrollTrack><ScrollThumb /></ScrollTrack>
                </LayerMenu>
              </LayerAnchor>
              <BlockButton aria-label="Insérer un bloc"><Icon name="block" size={16} /></BlockButton>
            </LayerTools>
          </PanelBox>
        </Ribbon>

        <FileTabs>
          <FileTab>500-210_PROCESS PLANT NEW*<Icon name="close" size={4} /></FileTab>
          <NewTab aria-label="Nouveau dessin"><Icon name="plus" size={5} /></NewTab>
        </FileTabs>

        <Work>
          <Dock>
            <DockBar>Gestionnaire de projets</DockBar>
            <DockBar>Propriétés</DockBar>
          </Dock>
          <Center>
            <Canvas>
              <Plant />
              <ViewLabel>[−][Haut][Filaire 2D]</ViewLabel>
              <NavBar>
                {['wheel', 'orbit', 'zoomNav', 'pan', 'showMotion'].map(n => <Icon key={n} name={n} size={10} />)}
              </NavBar>
            </Canvas>
            <Command>
              <CommandTools><Icon name="close" size={6} /><Icon name="wrench" size={8} /></CommandTools>
              <CommandBody>
                <History><span>Commande:</span><span>Commande:</span></History>
                <CommandLine>
                  <Icon name="prompt" size={8} /><Caret />
                  <input aria-label="Ligne de commande" placeholder="Entrez une commande" />
                </CommandLine>
              </CommandBody>
            </Command>
          </Center>
          <Dock>
            <DockBar>Palettes d'outils - AutoCAD Plant 3D - Composa...</DockBar>
            <DockBar>Références externes</DockBar>
            <DockBar>DesignCenter</DockBar>
          </Dock>
        </Work>

        <Status>
          <StatusTools>
            {status.map((s, i) => (
              <StatusButton key={i} $w={s.w} aria-label={s.text ?? s.icon}>
                {s.icon ? <Icon name={s.icon} size={s.icon === 'gear' ? 7 : 9} /> : s.text}
                {s.menu && <Caret />}
              </StatusButton>
            ))}
          </StatusTools>
        </Status>
      </Page>
    </>
  );
}

const LayerTools = styled.div`display: flex; align-items: flex-start; padding-left: 1px;`;
const BlockButton = styled.button`height: 10px; margin: 3px 0 0 10px; overflow: hidden;`;
